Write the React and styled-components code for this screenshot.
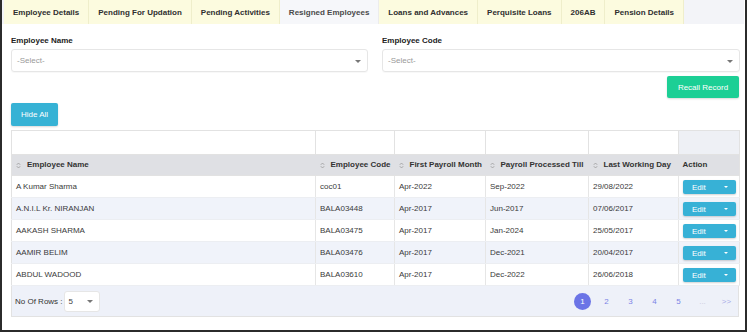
import React from "react";
import styled, { createGlobalStyle } from "styled-components";

const GlobalStyle = createGlobalStyle`
  html, body {
    margin: 0;
    padding: 0;
    background: #ffffff;
  }
  body {
    font-family: "Liberation Sans", Arial, sans-serif;
    font-size: 8px;
    color: #333;
  }
`;

const tabs = [
  "Employee Details",
  "Pending For Updation",
  "Pending Activities",
  "Resigned Employees",
  "Loans and Advances",
  "Perquisite Loans",
  "206AB",
  "Pension Details",
];

const rows = [
  ["A Kumar Sharma", "coc01", "Apr-2022", "Sep-2022", "29/08/2022"],
  ["A.N.I.L Kr. NIRANJAN", "BALA03448", "Apr-2017", "Jun-2017", "07/06/2017"],
  ["AAKASH SHARMA", "BALA03475", "Apr-2017", "Jan-2024", "25/05/2017"],
  ["AAMIR BELIM", "BALA03476", "Apr-2017", "Dec-2021", "20/04/2017"],
  ["ABDUL WADOOD", "BALA03610", "Apr-2017", "Dec-2022", "26/06/2018"],
];

const columns = [
  { title: "Employee Name", width: 304, sort: true },
  { title: "Employee Code", width: 79, sort: true },
  { title: "First Payroll Month", width: 91, sort: true },
  { title: "Payroll Processed Till", width: 103, sort: true },
  { title: "Last Working Day", width: 90, sort: true },
  { title: "Action", width: 61, sort: false },
];

const SortIcon = () => (
  <svg width="5" height="7" viewBox="0 0 5 7">
    <path d="M0.8 2.8 L2.5 1 L4.2 2.8" fill="none" stroke="#9a9a9a" strokeWidth="0.8" />
    <path d="M0.8 4.2 L2.5 6 L4.2 4.2" fill="none" stroke="#9a9a9a" strokeWidth="0.8" />
  </svg>
);

export default function App() {
  return (
    <>
      <GlobalStyle />
      <Frame>
        <TabBar>
          {tabs.map((t) => (
            <Tab key={t} active={t === "Resigned Employees"}>
              {t}
            </Tab>
          ))}
        </TabBar>
        <Content>
          <Filters>
            <Field>
              <Label>Employee Name</Label>
              <Select>
                -Select-
                <Caret />
              </Select>
            </Field>
            <Field>
              <Label>Employee Code</Label>
              <Select>
                -Select-
                <Caret />
              </Select>
            </Field>
          </Filters>
          <RecallRow>
            <RecallButton>Recall Record</RecallButton>
          </RecallRow>
          <HideButton>Hide All</HideButton>
          <Table>
            <colgroup>
              {columns.map((c) => (
                <col key={c.title} style={{ width: c.width }} />
              ))}
            </colgroup>
            <thead>
              <tr>
                {columns.map((c) => (
                  <FilterCell key={c.title} action={!c.sort} />
                ))}
              </tr>
              <tr>
                {columns.map((c) => (
                  <HeadCell key={c.title}>
                    {c.sort && <SortIcon />}
                    <span>{c.title}</span>
                  </HeadCell>
                ))}
              </tr>
            </thead>
            <tbody>
              {rows.map((r, i) => (
                <Row key={r[0]} striped={i % 2 === 1}>
                  {r.map((v, j) => (
                    <Cell key={j}>{v}</Cell>
                  ))}
                  <Cell>
                    <EditButton>
                      <span>Edit</span>
                      <SmallCaret />
                    </EditButton>
                  </Cell>
                </Row>
              ))}
            </tbody>
          </Table>
          <Footer>
            <RowsPicker>
              No Of Rows :
              <RowsSelect>
                5
                <Caret />
              </RowsSelect>
            </RowsPicker>
            <Pager>
              <Page current>1</Page>
              <Page>2</Page>
              <Page>3</Page>
              <Page>4</Page>
              <Page>5</Page>
              <Page muted>...</Page>
              <Page faded>&gt;&gt;</Page>
            </Pager>
          </Footer>
        </Content>
      </Frame>
    </>
  );
}

const Frame = styled.div`
  box-sizing: border-box;
  width: 747px;
  height: 332px;
  border: 2px solid #2b2b2b;
  border-top: none;
  background: #fff;
`;

const TabBar = styled.div`
  display: flex;
  height: 24px;
  background: #f3f4f8;
  padding-left: 2px;
  margin-right: 1px;
`;

const Tab = styled.div`
  box-sizing: border-box;
  display: flex;
  align-items: center;
  padding: 0 9px;
  height: 24px;
  font-weight: bold;
  font-size: 8px;
  color: ${(p) => (p.active ? "#4a4a4a" : "#2f2f2f")};
  background: ${(p) => (p.active ? "#f6f7fa" : "#fcfbdf")};
  border-right: 1px solid ${(p) => (p.active ? "#ececec" : "#efeecb")};
  white-space: nowrap;
`;

const Content = styled.div`
  padding: 11px 6px 0 9px;
`;

const Filters = styled.div`
  display: grid;
  grid-template-columns: 357px 358px;
  gap: 14px;
`;

const Field = styled.div`
  display: flex;
  flex-direction: column;
`;

const Label = styled.div`
  font-weight: bold;
  font-size: 8px;
  color: #222;
  line-height: 12px;
  margin-bottom: 2px;
`;

const Select = styled.div`
  box-sizing: border-box;
  position: relative;
  height: 23px;
  display: flex;
  align-items: center;
  padding-left: 5px;
  border: 1px solid #e6e6e6;
  border-radius: 3px;
  color: #999;
  font-size: 8px;
  box-shadow: 0 1px 1px rgba(0, 0, 0, 0.03);
`;

const Caret = styled.span`
  position: absolute;
  right: 6px;
  top: 50%;
  margin-top: -1px;
  width: 0;
  height: 0;
  border-left: 3px solid transparent;
  border-right: 3px solid transparent;
  border-top: 3px solid #777;
`;

const RecallRow = styled.div`
  display: flex;
  justify-content: flex-end;
  margin-top: 4px;
`;

const RecallButton = styled.div`
  box-sizing: border-box;
  width: 72px;
  height: 22px;
  display: flex;
  align-items: center;
  justify-content: center;
  background: #1ccf95;
  color: #fff;
  font-size: 8px;
  border-radius: 2px;
  box-shadow: 0 1px 2px rgba(0, 0, 0, 0.15);
`;

const HideButton = styled.div`
  box-sizing: border-box;
  width: 47px;
  height: 23px;
  margin-top: 5px;
  display: flex;
  align-items: center;
  justify-content: center;
  background: #36b2d5;
  color: #fff;
  font-size: 8px;
  border-radius: 2px;
  box-shadow: 0 1px 2px rgba(0, 0, 0, 0.15);
`;

const Table = styled.table`
  margin-top: 4px;
  width: 728px;
  table-layout: fixed;
  border-collapse: collapse;
  border: 1px solid #e2e2e2;
  font-size: 8px;
`;

const FilterCell = styled.th`
  height: 23px;
  padding: 0;
  border: 1px solid #e2e2e2;
  background: ${(p) => (p.action ? "#eef0f5" : "#fff")};
`;

const HeadCell = styled.th`
  height: 20px;
  padding: 0 4px;
  background: #dfe0e4;
  font-weight: bold;
  color: #333;
  text-align: left;
  white-space: nowrap;
  overflow: hidden;
  border-bottom: 1px solid #e2e2e2;
  svg {
    vertical-align: middle;
    margin: 0 6px 0 0;
  }
  span {
    vertical-align: middle;
  }
`;

const Row = styled.tr`
  background: ${(p) => (p.striped ? "#f0f3fa" : "#fff")};
`;

const Cell = styled.td`
  height: 21px;
  padding: 0 4px;
  border-right: 1px solid #e6e6e6;
  border-bottom: 1px solid #eceef2;
  color: #3a3a3a;
  white-space: nowrap;
  overflow: hidden;
`;

const EditButton = styled.div`
  box-sizing: border-box;
  width: 53px;
  height: 14px;
  margin-top: 1px;
  display: flex;
  align-items: center;
  justify-content: space-between;
  padding: 0 8px 0 9px;
  background: #37b1d6;
  color: #fff;
  font-size: 8px;
  border-radius: 2px;
  box-shadow: 0 1px 2px rgba(0, 0, 0, 0.18);
`;

const SmallCaret = styled.span`
  width: 0;
  height: 0;
  border-left: 2px solid transparent;
  border-right: 2px solid transparent;
  border-top: 2px solid #fff;
`;

const Footer = styled.div`
  box-sizing: border-box;
  width: 728px;
  height: 31px;
  display: flex;
  align-items: center;
  justify-content: space-between;
  padding: 0 3px 0 3px;
  background: #eef1f9;
  border: 1px solid #e2e2e2;
  border-top: none;
`;

const RowsPicker = styled.div`
  display: flex;
  align-items: center;
  color: #333;
  font-size: 8px;
`;

const RowsSelect = styled.div`
  box-sizing: border-box;
  position: relative;
  width: 36px;
  height: 21px;
  margin-left: 1px;
  display: flex;
  align-items: center;
  padding-left: 4px;
  background: #fff;
  border: 1px solid #e6e6e6;
  border-radius: 3px;
  color: #444;
`;

const Pager = styled.div`
  display: flex;
  align-items: center;
  gap: 7px;
  padding-top: 1px;
`;

const Page = styled.div`
  width: 17px;
  height: 17px;
  border-radius: 50%;
  display: flex;
  align-items: center;
  justify-content: center;
  font-size: 8px;
  background: ${(p) => (p.current ? "#6b74e6" : "transparent")};
  color: ${(p) =>
    p.current ? "#fff" : p.muted ? "#c9cbe0" : p.faded ? "#a8ade8" : "#7c84e6"};
`;
